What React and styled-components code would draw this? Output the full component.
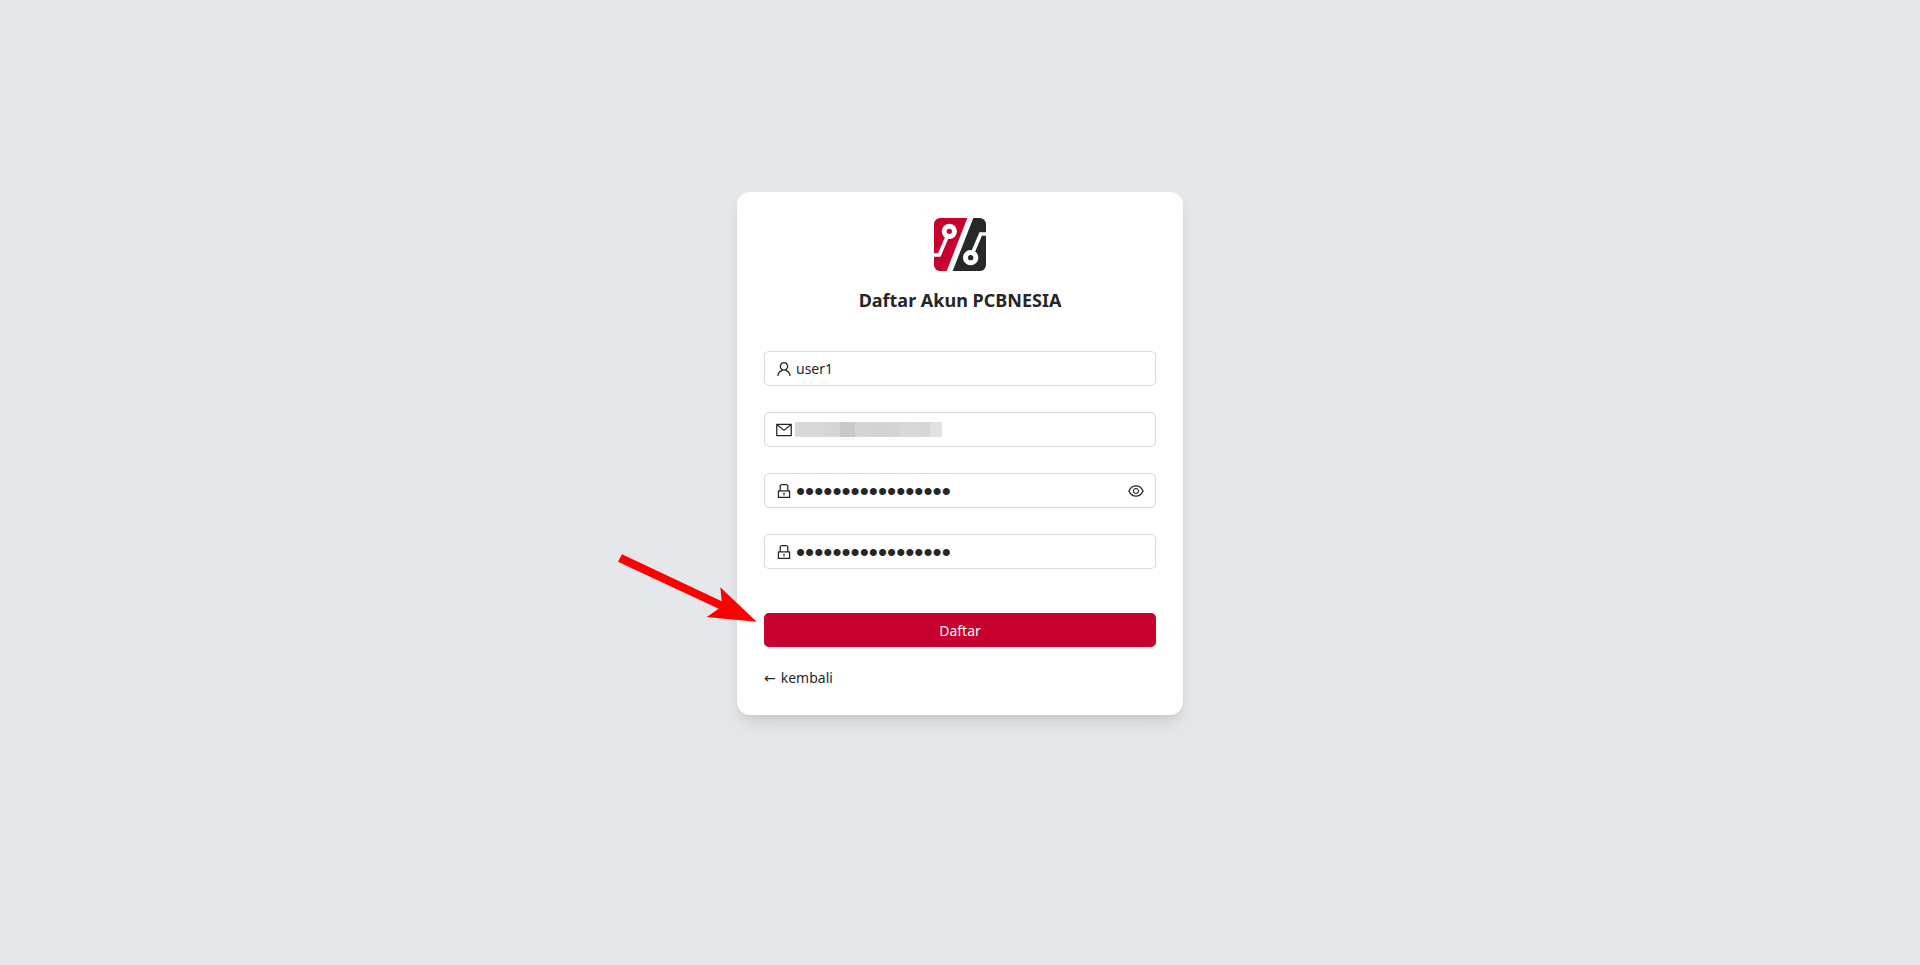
import React, { useState } from "react";
import styled, { createGlobalStyle } from "styled-components";
import {
  AiOutlineEye,
  AiOutlineEyeInvisible,
  AiOutlineLock,
  AiOutlineMail,
  AiOutlineUser
} from "react-icons/ai";

const GlobalStyle = createGlobalStyle`
  * {
    box-sizing: border-box;
  }
  body {
    margin: 0;
    background: #e5e7eb;
    color: #262626;
    font-family: "Noto Sans", "Open Sans", sans-serif;
    font-size: 14px;
    line-height: 22px;
  }
`;

const Page = styled.main`
  display: flex;
  align-items: center;
  justify-content: center;
  min-height: 94vh;
`;

const Card = styled.form`
  display: flex;
  flex-direction: column;
  width: 100%;
  max-width: 446px;
  padding: 26px 27px;
  border-radius: 13px;
  background: #fff;
  box-shadow: 0 11px 17px -3px rgba(0, 0, 0, 0.1),
    0 4px 7px -2px rgba(0, 0, 0, 0.05);
`;

const Header = styled.header`
  display: flex;
  flex-direction: column;
  align-items: center;
  gap: 16px;
  margin-bottom: 38px;
`;

const Title = styled.h1`
  margin: 0;
  font-size: 18px;
  line-height: 26px;
  font-weight: 700;
`;

const Fields = styled.div`
  display: flex;
  flex-direction: column;
  gap: 26px;
`;

const FieldBox = styled.div`
  display: flex;
  align-items: center;
  height: 35px;
  padding: 0 10px;
  border: 1px solid #d9d9d9;
  border-radius: 5px;
  background: #fff;
  &:focus-within {
    border-color: #c8002f;
  }
`;

const FieldLabel = styled.label`
  display: flex;
  margin-right: 3px;
  svg {
    width: 18px;
    height: 18px;
  }
`;

const FieldInput = styled.input`
  flex: 1;
  min-width: 0;
  height: 33px;
  padding: 0;
  border: 0;
  outline: 0;
  background: transparent;
  color: inherit;
  font: inherit;
  &[type="password"] {
    padding-top: 2px;
    font-family: "Liberation Sans", sans-serif;
    font-size: 26px;
  }
`;

const EyeButton = styled.button`
  display: flex;
  padding: 0;
  border: 0;
  background: transparent;
  color: inherit;
  cursor: pointer;
  svg {
    width: 18px;
    height: 18px;
  }
`;

const Mosaic = styled.span`
  display: flex;
  margin-left: -1px;
`;

const MosaicTile = styled.span`
  width: ${props => (props.$narrow ? 12 : 15)}px;
  height: 15px;
  background: ${props => props.$color};
  box-shadow: ${props => (props.$shade ? "0 3px 0 #f8f8f8" : "none")};
`;

const SubmitRow = styled.div`
  position: relative;
  margin-top: 44px;
`;

const SubmitButton = styled.button`
  width: 100%;
  height: 34px;
  padding: 1px 0 0;
  border: 0;
  border-radius: 5px;
  background: #c8002f;
  box-shadow: 0 2px 0 rgba(0, 0, 0, 0.04);
  color: #fff;
  font: inherit;
  cursor: pointer;
`;

const Arrow = styled.svg`
  position: absolute;
  top: -61px;
  left: -148px;
  width: 142px;
  height: 72px;
  pointer-events: none;
`;

const BackLink = styled.a`
  display: flex;
  align-self: flex-start;
  gap: 5px;
  margin-top: 20px;
  color: inherit;
  text-decoration: none;
`;

const BackArrow = styled.span`
  font-family: "DejaVu Sans", sans-serif;
`;

const Logo = () => (
  <svg width="52" height="53" viewBox="0 0 156 159" role="img" aria-label="PCBNESIA">
    <clipPath id="logo-shape">
      <rect width="156" height="159" rx="19" />
    </clipPath>
    <g clipPath="url(#logo-shape)">
      <path fill="#c8002f" d="M0 0h100L38 159H0z" />
      <path fill="#282829" d="M118 0h38v159H56z" />
      <g fill="none" stroke="#fff">
        <path strokeWidth="11" d="M0 111h16l24-56M156 48h-16l-24 56" />
        <circle cx="46" cy="40" r="15.5" strokeWidth="15" />
        <circle cx="110" cy="119" r="15.5" strokeWidth="15" />
      </g>
    </g>
  </svg>
);

const tiles = [
  "#d9d8d7",
  "#d6d8dc",
  "#d6d5d4",
  "#c9c9c9",
  "#d5d5d6",
  "#d3d3d4",
  "#d2d4d8",
  "#d8d8d6",
  "#d7d7d9",
  "#e1e1e1"
];

const Field = ({ id, label, icon: Icon, before, children, ...rest }) => (
  <FieldBox>
    <FieldLabel htmlFor={id} aria-label={label}>
      <Icon />
    </FieldLabel>
    {before}
    <FieldInput id={id} {...rest} />
    {children}
  </FieldBox>
);

const App = () => {
  const [visible, setVisible] = useState(false);
  const EyeIcon = visible ? AiOutlineEyeInvisible : AiOutlineEye;
  return (
    <>
      <GlobalStyle />
      <Page>
        <Card onSubmit={event => event.preventDefault()}>
          <Header>
            <Logo />
            <Title>Daftar Akun PCBNESIA</Title>
          </Header>
          <Fields>
            <Field
              id="username"
              label="Username"
              icon={AiOutlineUser}
              type="text"
              defaultValue="user1"
            />
            <Field
              id="email"
              label="Email"
              icon={AiOutlineMail}
              type="email"
              before={
                <Mosaic aria-hidden="true">
                  {tiles.map((color, index) => (
                    <MosaicTile
                      key={color}
                      $color={color}
                      $shade={index === 3}
                      $narrow={index === tiles.length - 1}
                    />
                  ))}
                </Mosaic>
              }
            />
            <Field
              id="password"
              label="Password"
              icon={AiOutlineLock}
              type={visible ? "text" : "password"}
              defaultValue="passwordpassword1"
            >
              <EyeButton
                type="button"
                aria-label="Toggle password"
                onClick={() => setVisible(!visible)}
              >
                <EyeIcon />
              </EyeButton>
            </Field>
            <Field
              id="confirm"
              label="Confirm password"
              icon={AiOutlineLock}
              type="password"
              defaultValue="passwordpassword1"
            />
          </Fields>
          <SubmitRow>
            <SubmitButton type="submit">Daftar</SubmitButton>
            <Arrow viewBox="0 0 142 72" aria-hidden="true">
              <path
                fill="#f00"
                d="M6 2.3 105.7 49.3 104.3 35.3 140.7 69.7 90.7 65 102.7 56.7 2 9.7z"
              />
            </Arrow>
          </SubmitRow>
          <BackLink href="#">
            <BackArrow>←</BackArrow>
            <span>kembali</span>
          </BackLink>
        </Card>
      </Page>
    </>
  );
};

export default App;
